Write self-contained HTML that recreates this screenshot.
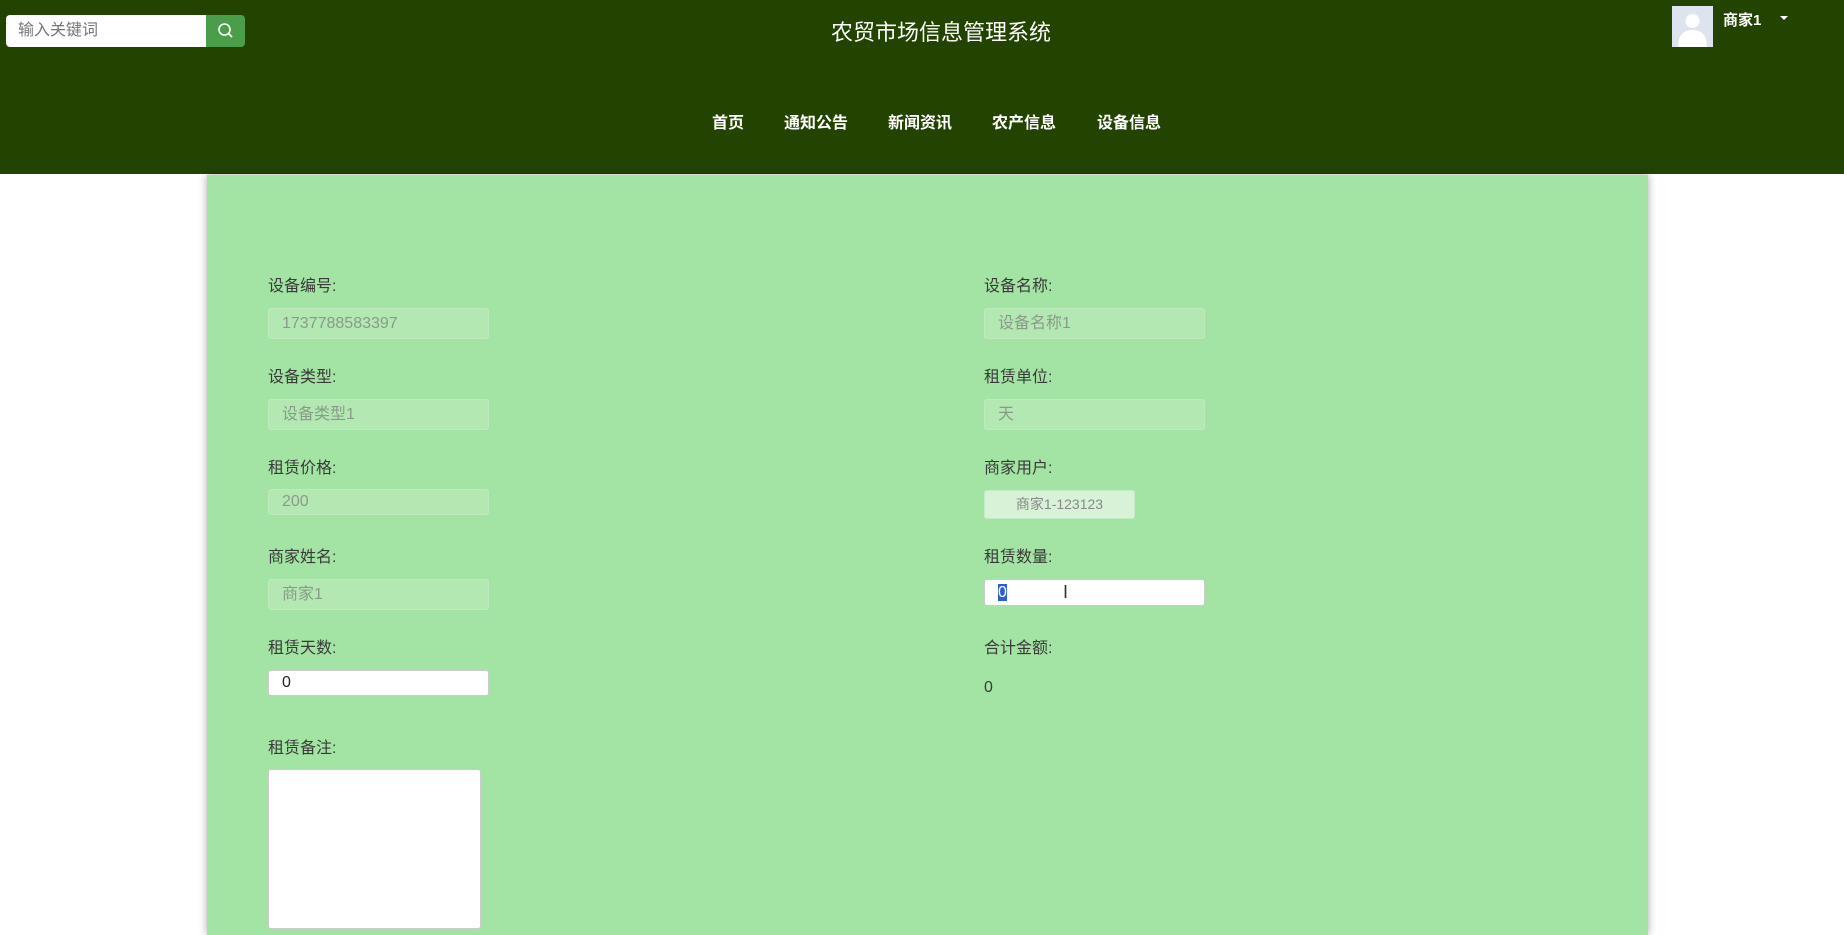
<!DOCTYPE html>
<html><head><meta charset="utf-8"><style>
*{box-sizing:border-box;margin:0;padding:0}
body{width:1844px;height:915px;overflow:hidden;background:#fff;font-family:"Liberation Sans","Noto Sans CJK SC",sans-serif;position:relative}
.hd{position:absolute;left:0;top:0;width:1844px;height:174px;background:#224400}
.abs{position:absolute}
.search{left:6px;top:15px;width:200px;height:32px;background:#fff;border-radius:4px 0 0 4px;color:#777;font-size:16px;line-height:32px;padding-left:12px}
.sbtn{left:206px;top:15px;width:39px;height:32px;background:#4a9e4a;border-radius:0 4px 4px 0}
.title{left:0;width:1882px;text-align:center;top:15px;font-size:22px;color:#fff}
.nav{top:109px;color:#fff;font-weight:bold;font-size:16px}
.panel{left:207px;top:175px;width:1441px;height:760px;background:#a3e3a3;box-shadow:0 0 8px rgba(0,0,0,.35)}
.lb{font-size:16px;color:#3a3a3a}
.in{height:31px;width:221px;background:#b3e8b3;border:1px solid #bfeabf;border-radius:3px;color:#8a9a8a;font-size:16px;padding-left:13px;line-height:29px}
.w{background:#fff;border:1px solid #ccc;color:#222}
</style></head><body>
<div class="hd"></div>
<div class="abs search">输入关键词</div>
<div class="abs sbtn"><svg width="39" height="32"><circle cx="18.5" cy="14.5" r="5.5" stroke="#fff" stroke-width="1.6" fill="none"/><line x1="22.5" y1="18.5" x2="26" y2="22" stroke="#fff" stroke-width="1.8"/></svg></div>
<div class="abs title">农贸市场信息管理系统</div>
<div class="abs nav" style="left:712px">首页</div>
<div class="abs nav" style="left:784px">通知公告</div>
<div class="abs nav" style="left:888px">新闻资讯</div>
<div class="abs nav" style="left:992px">农产信息</div>
<div class="abs nav" style="left:1097px">设备信息</div>
<div class="abs" style="left:1672px;top:6px;width:41px;height:41px;background:#dde4f0;overflow:hidden"><svg width="41" height="41"><circle cx="20.5" cy="15" r="7" fill="#fff"/><path d="M6 41 Q6 24 20.5 24 Q35 24 35 41Z" fill="#fff"/></svg></div>
<div class="abs" style="left:1723px;top:9px;color:#fff;font-weight:bold;font-size:15px">商家1</div>
<div class="abs" style="left:1780px;top:16px;width:0;height:0;border-left:4px solid transparent;border-right:4px solid transparent;border-top:4px solid #fff"></div>
<div class="abs panel"></div>

<div class="abs lb" style="left:268px;top:272px">设备编号:</div>
<div class="abs in" style="left:268px;top:308px">1737788583397</div>
<div class="abs lb" style="left:268px;top:363px">设备类型:</div>
<div class="abs in" style="left:268px;top:399px">设备类型1</div>
<div class="abs lb" style="left:268px;top:454px">租赁价格:</div>
<div class="abs in" style="left:268px;top:489px;height:26px;line-height:24px">200</div>
<div class="abs lb" style="left:268px;top:543px">商家姓名:</div>
<div class="abs in" style="left:268px;top:579px">商家1</div>
<div class="abs lb" style="left:268px;top:634px">租赁天数:</div>
<div class="abs in w" style="left:268px;top:670px;height:26px;line-height:24px">0</div>
<div class="abs lb" style="left:268px;top:734px">租赁备注:</div>
<div class="abs" style="left:268px;top:769px;width:213px;height:160px;background:#fff;border:1px solid #ccc;border-radius:3px"></div>

<div class="abs lb" style="left:984px;top:272px">设备名称:</div>
<div class="abs in" style="left:984px;top:308px">设备名称1</div>
<div class="abs lb" style="left:984px;top:363px">租赁单位:</div>
<div class="abs in" style="left:984px;top:399px">天</div>
<div class="abs lb" style="left:984px;top:454px">商家用户:</div>
<div class="abs" style="left:984px;top:490px;width:151px;height:29px;background:#d8f2d8;border:1px solid #c4ecc4;border-radius:3px;color:#888;font-size:14px;text-align:center;line-height:27px">商家1-123123</div>
<div class="abs lb" style="left:984px;top:543px">租赁数量:</div>
<div class="abs in w" style="left:984px;top:579px;height:27px;line-height:25px;padding-left:13px"><span style="background:#2a5fd0;color:#fff">0</span><span style="position:absolute;left:78px;top:0;font-size:18px;color:#333">I</span></div>
<div class="abs lb" style="left:984px;top:634px">合计金额:</div>
<div class="abs lb" style="left:984px;top:679px">0</div>
</body></html>
